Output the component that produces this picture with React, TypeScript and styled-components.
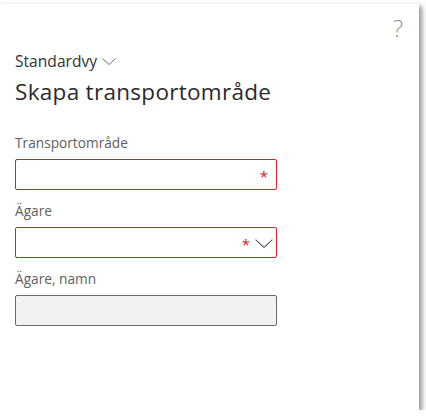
import React from 'react';
import styled, { createGlobalStyle } from 'styled-components';

const GlobalStyle = createGlobalStyle`
    html, body {
        margin: 0;
        padding: 0;
        background: #ffffff;
    }
    body {
        font-family: "Open Sans", "Noto Sans", sans-serif;
    }
`;

interface FieldProps {
    label: string;
    required?: boolean;
    lookup?: boolean;
    readOnly?: boolean;
}

const Chevron: React.FC<{ width: number }> = ({ width }) => (
    <svg width={width} height={width * 0.5} viewBox="0 0 16 8" fill="none">
        <path d="M0.5 0.5L8 7.5L15.5 0.5" stroke="#605e5c" strokeWidth="1" />
    </svg>
);

const Field: React.FC<FieldProps> = ({ label, required, lookup, readOnly }) => (
    <FieldBlock>
        <Label>{label}</Label>
        <InputBox required={required} readOnly={readOnly} lookup={lookup}>
            {required && <Asterisk>*</Asterisk>}
            {lookup && <Chevron width={18} />}
        </InputBox>
    </FieldBlock>
);

const App: React.FC = () => {
    return (
        <>
            <GlobalStyle />
            <Panel>
                <HelpRow>
                    <HelpMark>?</HelpMark>
                </HelpRow>
                <ViewSelector>
                    Standardvy <Chevron width={14} />
                </ViewSelector>
                <Title>Skapa transportområde</Title>
                <Form>
                    <Field label="Transportområde" required />
                    <Field label="Ägare" required lookup />
                    <Field label="Ägare, namn" readOnly />
                </Form>
            </Panel>
        </>
    );
};

export default App;

const Panel = styled.div`
    box-sizing: border-box;
    width: 419px;
    height: 407px;
    margin-top: 3px;
    padding: 0 15px;
    background: #ffffff;
    border-top: 1px solid #f3f3f3;
    box-shadow: 3px 3px 5px rgba(0, 0, 0, 0.42);
    display: flex;
    flex-direction: column;
`;

const HelpRow = styled.div`
    display: flex;
    justify-content: flex-end;
    height: 47px;
    padding-right: 1px;
`;

const HelpMark = styled.span`
    font-family: "Open Sans", sans-serif;
    font-weight: 300;
    font-size: 23px;
    line-height: 23px;
    height: 23px;
    color: #939190;
    margin-top: 13px;
`;

const ViewSelector = styled.div`
    display: flex;
    align-items: center;
    gap: 5px;
    font-size: 15.6px;
    color: #323130;
    line-height: 20px;
`;

const Title = styled.h1`
    margin: 6px 0 0;
    font-size: 22.5px;
    font-weight: 400;
    letter-spacing: 0.3px;
    line-height: 30px;
    color: #2b2a29;
`;

const Form = styled.div`
    display: flex;
    flex-direction: column;
    gap: 12px;
    margin-top: 27px;
`;

const FieldBlock = styled.div`
    display: flex;
    flex-direction: column;
    gap: 7px;
`;

const Label = styled.div`
    font-size: 13.7px;
    line-height: 18px;
    color: #605e5c;
`;

const InputBox = styled.div<{ required?: boolean; readOnly?: boolean; lookup?: boolean }>`
    box-sizing: border-box;
    width: 262px;
    height: 31px;
    border: 1px solid ${(p) => (p.required ? '#c4262e' : '#6b6966')};
    border-radius: 2px;
    background: ${(p) => (p.readOnly ? '#f3f2f1' : '#ffffff')};
    display: flex;
    align-items: center;
    justify-content: flex-end;
    gap: 5px;
    padding-right: ${(p) => (p.lookup ? '3px' : '8px')};

    svg {
        margin-top: 2px;
    }
`;

const Asterisk = styled.span`
    color: #c4262e;
    font-size: 15px;
    line-height: 15px;
    height: 15px;
    margin-top: 3px;
`;
